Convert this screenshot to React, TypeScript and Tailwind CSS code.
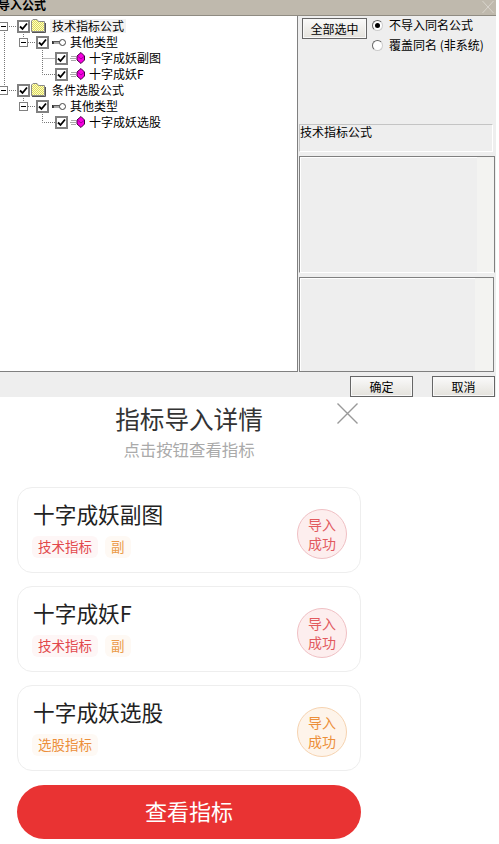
const cjk = "font-['Noto_Sans_CJK_SC','Noto_Sans',sans-serif]";

function Check() {
  return (
    <span className="w-[13px] h-[13px] border-2 border-[#808080] bg-white flex items-center justify-center shrink-0">
      <svg width="9" height="9" viewBox="0 0 9 9"><path d="M1 4.5 L3.5 7 L8 1.5" fill="none" stroke="#000" strokeWidth="1.8" /></svg>
    </span>
  );
}
function Folder() {
  return (
    <svg width="15" height="14" viewBox="0 0 15 14" className="ml-[1px] -mt-[1px] shrink-0">
      <defs>
        <pattern id="dith" width="2" height="2" patternUnits="userSpaceOnUse">
          <rect width="2" height="2" fill="#ffffc0" />
          <rect width="1" height="1" fill="#dcd860" />
          <rect x="1" y="1" width="1" height="1" fill="#dcd860" />
        </pattern>
      </defs>
      <path d="M0.5 12.5 V2 L2 0.5 H6 L7.5 2.5 H13.5 V12.5 Z" fill="url(#dith)" stroke="#8a8a8a" />
      <path d="M1 13.5 H14.5 V4" fill="none" stroke="#555" />
    </svg>
  );
}
function KeyIcon() {
  return (
    <svg width="14" height="9" viewBox="0 0 14 9" className="ml-[3px] shrink-0">
      <path d="M1 3 V6" stroke="#333" strokeWidth="2" fill="none" />
      <path d="M1 3.5 H8 M1 5 H8" stroke="#555" fill="none" />
      <circle cx="10.5" cy="4.5" r="3" fill="#fff" stroke="#444" />
    </svg>
  );
}
function Gem() {
  return (
    <svg width="15" height="12" viewBox="0 0 15 12" className="ml-[2px] shrink-0">
      <path d="M1 4.5 H6 M0 6.5 H6 M1 8.5 H6" stroke="#aaa" />
      <path d="M11 0.5 L14.5 4 V8 L11 11.5 L7 8 V4 Z" fill="#f800e0" stroke="#400040" />
      <path d="M8 4.5 L11 7 L14 4.5" fill="none" stroke="#a000a0" />
    </svg>
  );
}
function Row({ pl, icon, text, hl }: { pl: string; icon: React.ReactNode; text: string; hl?: boolean }) {
  return (
    <div className={`h-4 flex items-center ${pl}`}>
      <Check />
      {icon}
      <span className={`text-[12px] leading-[14px] text-black whitespace-nowrap ${hl ? "ml-[4px] px-[2px] bg-[#f2f2f2]" : pl === "pl-[17px]" ? "ml-[6px]" : "ml-[4px]"}`}>{text}</span>
    </div>
  );
}
function TreeLines() {
  const Box = ({ x, y }: { x: number; y: number }) => (
    <g>
      <rect x={x + 0.5} y={y + 0.5} width="8" height="8" fill="#fff" stroke="#808080" />
      <path d={`M${x + 2} ${y + 4.5} H${x + 7}`} stroke="#000" />
    </g>
  );
  const dot = { stroke: "#777", strokeDasharray: "1 1", fill: "none" };
  return (
    <svg className="absolute left-0 top-0 pointer-events-none" width="60" height="130" viewBox="0 0 60 130">
      <path d="M4.5 14 V74 M9 10.5 H17" {...dot} />
      <path d="M9 74.5 H17 M23.5 18 V22 M23.5 82 V86" {...dot} />
      <path d="M28 26.5 H36 M28 90.5 H36" {...dot} />
      <path d="M42.5 34 V58.5 H55 M42.5 42.5 H55 M42.5 98 V106.5 H55" {...dot} />
      <Box x={-1} y={6} />
      <Box x={19} y={22} />
      <Box x={-1} y={70} />
      <Box x={19} y={86} />
    </svg>
  );
}
function WinBtn({ children, w }: { children: React.ReactNode; w: string }) {
  return (
    <div className={`${w} h-[21px] border border-[#666] bg-gradient-to-b from-[#fafafa] to-[#e4e2dc] flex items-center justify-center text-[12px] text-black shadow-[inset_0_0_0_1px_#f8f8f8]`}>
      {children}
    </div>
  );
}
function Radio({ on, text }: { on?: boolean; text: string }) {
  return (
    <div className="flex items-center h-5">
      <span className="w-[11px] h-[11px] rounded-full bg-white border border-[#ccc] border-t-[#666] border-l-[#666] flex items-center justify-center mr-[6px] shrink-0">
        {on && <span className="w-[5px] h-[5px] rounded-full bg-black" />}
      </span>
      <span className="text-[12px] text-black whitespace-nowrap">{text}</span>
    </div>
  );
}
function Tag({ color, bg, children }: { color: string; bg: string; children: React.ReactNode }) {
  return <span className={`h-[22px] px-[6px] pb-[1px] rounded-[6px] flex items-center text-[13.5px] ${color} ${bg}`}>{children}</span>;
}
function Card({ title, tags, orange }: { title: string; tags: React.ReactNode; orange?: boolean }) {
  return (
    <div className="h-[86px] rounded-[15px] border border-[#eeeeee] bg-white flex items-center justify-between pl-[14px] pr-[13px]">
      <div className="flex flex-col self-start pt-[11px]">
        <span className="ml-[1px] text-[21.7px] leading-[30px] text-[#222] whitespace-nowrap">{title}</span>
        <div className="flex gap-[7px] mt-[7px]">{tags}</div>
      </div>
      <div
        className={`w-[50px] h-[50px] mt-[8px] rounded-full border flex flex-col items-center justify-center text-[14px] leading-[19px] ${
          orange ? "bg-[#fef4ea] border-[#f6d3b0] text-[#ec8f3a]" : "bg-[#fdeeee] border-[#f0c0c4] text-[#e25a5e]"
        }`}
      >
        <span>导入</span>
        <span>成功</span>
      </div>
    </div>
  );
}

export default function App() {
  return (
    <div className={`w-full h-[844px] overflow-hidden bg-white ${cjk}`}>
      <div className="w-[496px] h-[397px] bg-[#eeeeee] flex flex-col">
        <div className="h-[16px] bg-[#bfb9ad] border-b border-[#8f8b82] flex items-center justify-between shrink-0">
          <span className="text-[12px] font-bold text-black -ml-[2px] -mt-[5px] leading-none">导入公式</span>
          <svg width="12" height="13" viewBox="0 0 12 13" className="mr-[2px]"><path d="M0.5 0 L11.5 12 M11.5 0 L0.5 12" stroke="#d8d4cc" /></svg>
        </div>
        <div className="h-[356px] flex shrink-0">
          <div className="relative w-[298px] h-full bg-white border-r border-b border-[#808080] pt-[2px] shrink-0">
            <TreeLines />
            <Row pl="pl-[17px]" icon={<Folder />} text="技术指标公式" hl />
            <Row pl="pl-[36px]" icon={<KeyIcon />} text="其他类型" />
            <Row pl="pl-[55px]" icon={<Gem />} text="十字成妖副图" />
            <Row pl="pl-[55px]" icon={<Gem />} text="十字成妖F" />
            <Row pl="pl-[17px]" icon={<Folder />} text="条件选股公式" />
            <Row pl="pl-[36px]" icon={<KeyIcon />} text="其他类型" />
            <Row pl="pl-[55px]" icon={<Gem />} text="十字成妖选股" />
          </div>
          <div className="w-[198px] flex flex-col pl-[1px] pr-[1px] pt-[2px]">
            <div className="h-[106px] flex pl-[3px] gap-[5px]">
              <WinBtn w="w-[65px]">全部选中</WinBtn>
              <div className="flex flex-col -mt-[3px]">
                <Radio on text="不导入同名公式" />
                <Radio text="覆盖同名 (非系统)" />
              </div>
            </div>
            <div className="h-[28px] mr-[2px] border border-[#c4c4c4] border-b-white border-r-white text-[12px] leading-[14px] text-black whitespace-nowrap">技术指标公式</div>
            <div className="h-[117px] mt-[4px] border border-[#808080] border-b-white flex shadow-[inset_1px_1px_0_#fff]">
              <div className="flex-1" />
              <div className="w-[17px] bg-[#f3f3f1]" />
            </div>
            <div className="h-[95px] mt-[4px] mr-[1px] border border-[#808080] flex shadow-[inset_1px_1px_0_#fff]">
              <div className="flex-1" />
              <div className="w-[18px] bg-[#f3f3f1]" />
            </div>
          </div>
        </div>
        <div className="flex justify-end gap-[19px] pr-[1px] pt-[4px]">
          <WinBtn w="w-[63px]">确定</WinBtn>
          <WinBtn w="w-[63px]">取消</WinBtn>
        </div>
      </div>
      <div className="relative w-[378px] px-[17px]">
        <svg className="absolute left-[337px] top-[6px]" width="21" height="21" viewBox="0 0 21 21"><path d="M0.5 0.5 L20.5 20.5 M20.5 0.5 L0.5 20.5" stroke="#999" strokeWidth="1.4" /></svg>
        <div className="flex flex-col items-center pt-[5px]">
          <span className="text-[24.6px] leading-[32px] text-[#333]">指标导入详情</span>
          <span className="text-[16.4px] leading-[22px] text-[#aaaaaa] mt-[4px]">点击按钮查看指标</span>
        </div>
        <div className="flex flex-col gap-[13px] mt-[27px]">
          <Card
            title="十字成妖副图"
            tags={<><Tag color="text-[#e2484c]" bg="bg-[#fef6f6]">技术指标</Tag><Tag color="text-[#eb9a48]" bg="bg-[#fef9f4]">副</Tag></>}
          />
          <Card
            title="十字成妖F"
            tags={<><Tag color="text-[#e2484c]" bg="bg-[#fef6f6]">技术指标</Tag><Tag color="text-[#eb9a48]" bg="bg-[#fef9f4]">副</Tag></>}
          />
          <Card
            orange
            title="十字成妖选股"
            tags={<Tag color="text-[#ec8f3a]" bg="bg-[#fef9f4]">选股指标</Tag>}
          />
        </div>
        <div className="h-[54px] mt-[14px] pb-[3px] rounded-full bg-[#e93333] flex items-center justify-center text-[22px] text-white">查看指标</div>
      </div>
    </div>
  );
}
